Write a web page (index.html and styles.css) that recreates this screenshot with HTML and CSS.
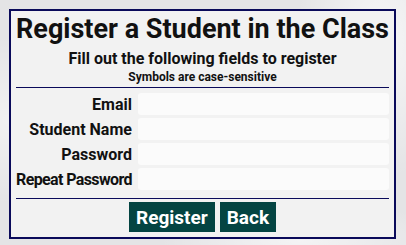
FILE: index.html
```html
<!DOCTYPE html>
<html>
<head>
<meta charset="utf-8">
<link rel="stylesheet" href="styles.css">
</head>
<body>
<div class="page">
  <div class="panel">
    <h1 class="title">Register a Student in the Class</h1>
    <p class="subtitle">Fill out the following fields to register</p>
    <p class="note">Symbols are case-sensitive</p>
    <hr class="rule">
    <form class="form">
      <label class="label" for="email">Email</label>
      <input class="field" id="email" type="text">
      <label class="label" for="name">Student Name</label>
      <input class="field" id="name" type="text">
      <label class="label" for="pw">Password</label>
      <input class="field" id="pw" type="password">
      <label class="label label-tight" for="pw2">Repeat Password</label>
      <input class="field" id="pw2" type="password">
    </form>
    <hr class="rule rule-bottom">
    <div class="actions">
      <button class="btn" type="button">Register</button>
      <button class="btn" type="button">Back</button>
    </div>
  </div>
</div>
</body>
</html>
```
FILE: styles.css
```css
html, body {
  margin: 0;
  padding: 0;
  height: 100%;
}
body {
  font-family: Roboto, "Liberation Sans", sans-serif;
  background:
    radial-gradient(ellipse 120px 200px at 380px 40px, rgba(255,255,255,0.7), rgba(255,255,255,0) 70%),
    radial-gradient(ellipse 140px 120px at 10px 120px, rgba(255,255,255,0.5), rgba(255,255,255,0) 70%),
    radial-gradient(ellipse 200px 60px at 300px 240px, rgba(255,255,255,0.6), rgba(255,255,255,0) 70%),
    #e4e4e6;
}
.page {
  padding: 9px 10px 6px 9px;
}
.panel {
  border: 2px solid #0a0a5a;
  background: #f2f2f2;
  padding: 4px 5px 5px 5px;
}
.title {
  margin: 0;
  font-size: 27px;
  line-height: 28px;
  font-weight: 700;
  color: #111;
  text-align: center;
  white-space: nowrap;
}
.subtitle {
  margin: 6px 0 0 0;
  font-size: 16px;
  line-height: 20px;
  font-weight: 700;
  color: #111;
  text-align: center;
}
.note {
  margin: 0;
  font-size: 12px;
  line-height: 16px;
  font-weight: 700;
  color: #111;
  text-align: center;
}
.rule {
  margin: 2px 0 0 0;
  border: 0;
  border-top: 1px solid #0a0a5a;
  height: 0;
}
.rule-bottom {
  margin-top: 0;
}
.form {
  display: grid;
  grid-template-columns: auto 1fr;
  column-gap: 6px;
  row-gap: 3px;
  align-items: center;
  padding: 5px 0 8px 0;
}
.label {
  text-align: right;
  font-size: 16px;
  font-weight: 700;
  color: #111;
  white-space: nowrap;
}
.label-tight {
  letter-spacing: -0.62px;
}
.field {
  height: 22px;
  box-sizing: border-box;
  border: 0;
  border-radius: 3px;
  background: #fbfbfb;
  margin: 0;
  padding: 0 4px;
  font-family: inherit;
}
.actions {
  display: flex;
  justify-content: center;
  gap: 5px;
  padding-top: 3px;
}
.btn {
  background: #044442;
  color: #fff;
  border: 0;
  font-family: inherit;
  font-weight: 700;
  font-size: 19px;
  height: 30px;
  padding: 0 7px;
  margin: 0;
}
```
